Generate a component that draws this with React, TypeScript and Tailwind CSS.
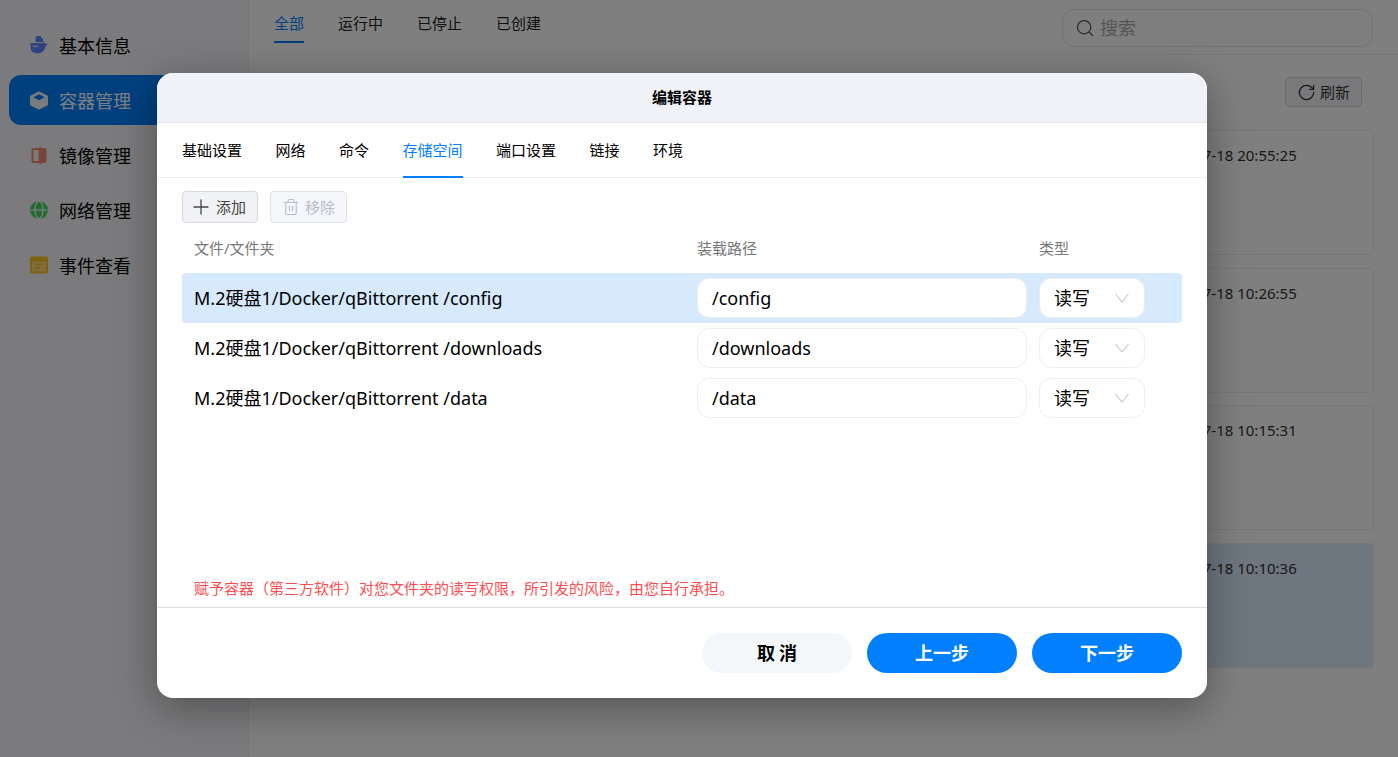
import React from "react";
import { Plus, Trash2, Search, RotateCw } from "lucide-react";

const font = "font-['Noto_Sans','Noto_Sans_CJK_SC',sans-serif]";

function Whale() {
  return (
    <svg width="18" height="18" viewBox="0 0 18 18" className="shrink-0">
      <path d="M5.5 1.5 L7 0 L11 0 L11 2 L13 2 L13 6 L5.5 6 Z" fill="#5a84ff" />
      <path d="M0.5 7 L12.6 7 L13.6 5.5 L15 7.5 L18 8 L15.5 10 Q14.5 17 8 17.5 Q0.5 17.5 0.5 10.5 Z" fill="#5a84ff" />
      <path d="M2.5 9.5 H8 V11 H2.5 Z" fill="#c8d6ff" />
    </svg>
  );
}

function Cube() {
  return (
    <svg width="18" height="19" viewBox="0 0 18 19" className="shrink-0">
      <path d="M9 0.3 L17.3 4.5 Q18 4.9 18 5.8 L18 13.2 Q18 14 17.3 14.4 L9 18.7 L0.7 14.4 Q0 14 0 13.2 L0 5.8 Q0 4.9 0.7 4.5 Z" fill="#f4f6f8" />
      <path d="M9 3.2 L14.6 6.2 L9 9.3 L3.4 6.2 Z" fill="#0080ff" />
    </svg>
  );
}

function Mirror() {
  return (
    <svg width="16" height="19" viewBox="0 0 16 19" className="shrink-0">
      <rect x="0.5" y="2" width="15" height="15" rx="2" fill="#f58a73" />
      <rect x="2.5" y="4" width="5" height="11" fill="#f8f8f8" />
      <rect x="8.5" y="0.5" width="1.3" height="18" fill="#f58a73" />
    </svg>
  );
}

function Globe() {
  return (
    <svg width="18" height="18" viewBox="0 0 18 18" className="shrink-0">
      <circle cx="9" cy="9" r="9" fill="#45d45f" />
      <ellipse cx="9" cy="9" rx="4" ry="8.6" fill="none" stroke="#f6f7f9" strokeWidth="1.3" />
      <path d="M0.5 9 H17.5" stroke="#f6f7f9" strokeWidth="1.3" />
    </svg>
  );
}

function Board() {
  return (
    <svg width="18" height="18" viewBox="0 0 18 18" className="shrink-0">
      <rect x="0" y="0.5" width="18" height="17" rx="2" fill="#ffc21f" />
      <rect x="2" y="5.5" width="14" height="10" rx="0.5" fill="#fff3cc" opacity="0.55" />
      <rect x="5" y="7.5" width="8" height="1.8" fill="#ffc21f" />
      <rect x="5" y="11" width="5" height="1.8" fill="#ffc21f" />
    </svg>
  );
}

function Chevron() {
  return (
    <svg width="16" height="12" viewBox="0 0 16 12" fill="none" className="shrink-0">
      <path d="M1.5 2 L8 10 L14.5 2" stroke="#c4c4c4" strokeWidth="1.1" />
    </svg>
  );
}

const sideItems: { label: string; icon: React.ReactNode; active?: boolean }[] = [
  { label: "基本信息", icon: <Whale /> },
  { label: "容器管理", icon: <Cube />, active: true },
  { label: "镜像管理", icon: <Mirror /> },
  { label: "网络管理", icon: <Globe /> },
  { label: "事件查看", icon: <Board /> },
];

const cards = [
  { time: "2023-07-18 20:55:25", cls: "mb-[13px] h-[125px] bg-white pt-[13px]" },
  { time: "2023-07-18 10:26:55", cls: "mb-[12px] h-[125px] bg-white pt-[13px]" },
  { time: "2023-07-18 10:15:31", cls: "mb-[13px] h-[125px] bg-white pt-[13px]" },
  { time: "2023-07-18 10:10:36", cls: "h-[125px] bg-[#dcedff] pt-[13px]" },
];

const rows = [
  { file: "M.2硬盘1/Docker/qBittorrent /config", mount: "/config", active: true },
  { file: "M.2硬盘1/Docker/qBittorrent /downloads", mount: "/downloads" },
  { file: "M.2硬盘1/Docker/qBittorrent /data", mount: "/data" },
];

const tabs = ["基础设置", "网络", "命令", "存储空间", "端口设置", "链接", "环境"];

export default function App() {
  return (
    <div className={`relative h-[757px] w-[1398px] overflow-hidden bg-white text-black ${font}`}>
      <div className="flex h-full">
        <aside className="h-full w-[249px] shrink-0 border-r border-[#eeeeee] bg-[#f6f7fa] px-[9px] pt-[20px]">
          {sideItems.map((it) => (
            <div
              key={it.label}
              className={`mb-[5px] flex h-[50px] items-center gap-[11px] rounded-xl pl-[21px] text-[18px] ${
                it.active ? "bg-[#0080ff] text-white" : "text-black"
              }`}
            >
              <span className="flex w-[18px] justify-center">{it.icon}</span>
              <span className="pt-[2px]">{it.label}</span>
            </div>
          ))}
        </aside>
        <main className="flex min-w-0 flex-1 flex-col">
          <div className="flex h-[55px] shrink-0 items-start border-b border-[#eeeeee] pl-[25px] pr-[25px]">
            <div className="flex gap-[34px] text-[15px] text-[#222222]">
              <div className="flex h-[43px] flex-col justify-end border-b-2 border-[#0080ff] pb-[7px] text-[#0080ff]">全部</div>
              <div className="flex h-[43px] flex-col justify-end pb-[9px]">运行中</div>
              <div className="flex h-[43px] flex-col justify-end pb-[9px]">已停止</div>
              <div className="flex h-[43px] flex-col justify-end pb-[9px]">已创建</div>
            </div>
            <div className="ml-auto mt-[9px] flex h-[38px] w-[311px] items-center gap-[5px] rounded-xl border border-[#e6e6e6] pl-[12px] text-[18px] text-[#aaaaaa]">
              <Search size={20} strokeWidth={1.5} className="text-[#555555]" />
              搜索
            </div>
          </div>
          <div className="flex justify-end pr-[36px] pt-[22px]">
            <div className="flex h-[30px] w-[77px] items-center justify-center gap-[4px] rounded border border-[#d8d8d8] bg-[#f2f3f7] text-[15px] text-[#333333]">
              <RotateCw size={19} strokeWidth={1.6} />
              刷新
            </div>
          </div>
          <div className="px-[24px] pt-[23px]">
            {cards.map((c) => (
              <div key={c.time} className={`rounded border border-[#eeeeee] pl-[881px] text-[15px] text-[#333333] ${c.cls}`}>
                {c.time}
              </div>
            ))}
          </div>
        </main>
      </div>

      <div className="absolute inset-0 bg-black/50" />

      <div className="absolute left-[157px] top-[73px] flex h-[625px] w-[1050px] flex-col overflow-hidden rounded-[16px] bg-white shadow-[0_10px_40px_rgba(0,0,0,0.35)]">
        <div className="flex h-[50px] shrink-0 items-center justify-center border-b border-[#e5e5e8] bg-[#f0f2f7] text-[15px] font-bold">
          编辑容器
        </div>
        <div className="flex h-[55px] shrink-0 gap-[33.5px] border-b border-[#eeeeee] pl-[25px] text-[15px]">
          {tabs.map((t) => (
            <div
              key={t}
              className={`flex items-center ${
                t === "存储空间" ? "-mb-px border-b-2 border-[#0080ff] pt-[2px] text-[#0080ff]" : "text-black"
              }`}
            >
              {t}
            </div>
          ))}
        </div>
        <div className="flex min-h-0 flex-1 flex-col px-[25px]">
          <div className="mt-[13px] flex gap-[12px] text-[15px]">
            <div className="flex h-[32px] w-[76px] items-center gap-[3px] rounded border border-[#d9d9dd] bg-[#f0f2f5] pl-[6px] text-[#444444]">
              <Plus size={24} strokeWidth={1.3} />
              添加
            </div>
            <div className="flex h-[32px] w-[77px] items-center justify-center gap-[5px] rounded border border-[#dfe1e6] bg-[#f5f7fa] text-[#b8bcc6]">
              <Trash2 size={18} strokeWidth={1.5} />
              移除
            </div>
          </div>
          <div className="mt-[15px] flex h-[20px] items-center pl-[12px] text-[15px] text-[#777777]">
            <div className="w-[503px]">文件/文件夹</div>
            <div className="w-[342px]">装载路径</div>
            <div>类型</div>
          </div>
          <div className="mt-[15px]">
            {rows.map((r) => (
              <div
                key={r.mount}
                className={`flex h-[50px] items-center rounded pl-[12px] text-[18px] ${r.active ? "bg-[#d6e9fd]" : ""}`}
              >
                <div className="w-[503px] whitespace-nowrap">{r.file}</div>
                <div className="flex h-[40px] w-[330px] items-center rounded-xl border border-[#eeeeee] bg-white pl-[14px]">
                  {r.mount}
                </div>
                <div className="ml-[12px] flex h-[40px] w-[106px] items-center justify-between rounded-xl border border-[#eeeeee] bg-white pl-[14px] pr-[14px]">
                  读写
                  <Chevron />
                </div>
              </div>
            ))}
          </div>
          <div className="mt-auto flex h-[38px] items-center pl-[12px] text-[15px] text-[#ff4d4f]">
            赋予容器（第三方软件）对您文件夹的读写权限，所引发的风险，由您自行承担。
          </div>
        </div>
        <div className="flex h-[91px] shrink-0 justify-end gap-[15px] border-t border-[#dedede] pr-[25px] pt-[25px] text-[18px] font-bold">
          <div className="flex h-[40px] w-[150px] items-center justify-center rounded-full bg-[#f4f7fa] pl-[4px] tracking-[4px] text-black">取消</div>
          <div className="flex h-[40px] w-[150px] items-center justify-center rounded-full bg-[#0080ff] text-white">上一步</div>
          <div className="flex h-[40px] w-[150px] items-center justify-center rounded-full bg-[#0080ff] text-white">下一步</div>
        </div>
      </div>
    </div>
  );
}
